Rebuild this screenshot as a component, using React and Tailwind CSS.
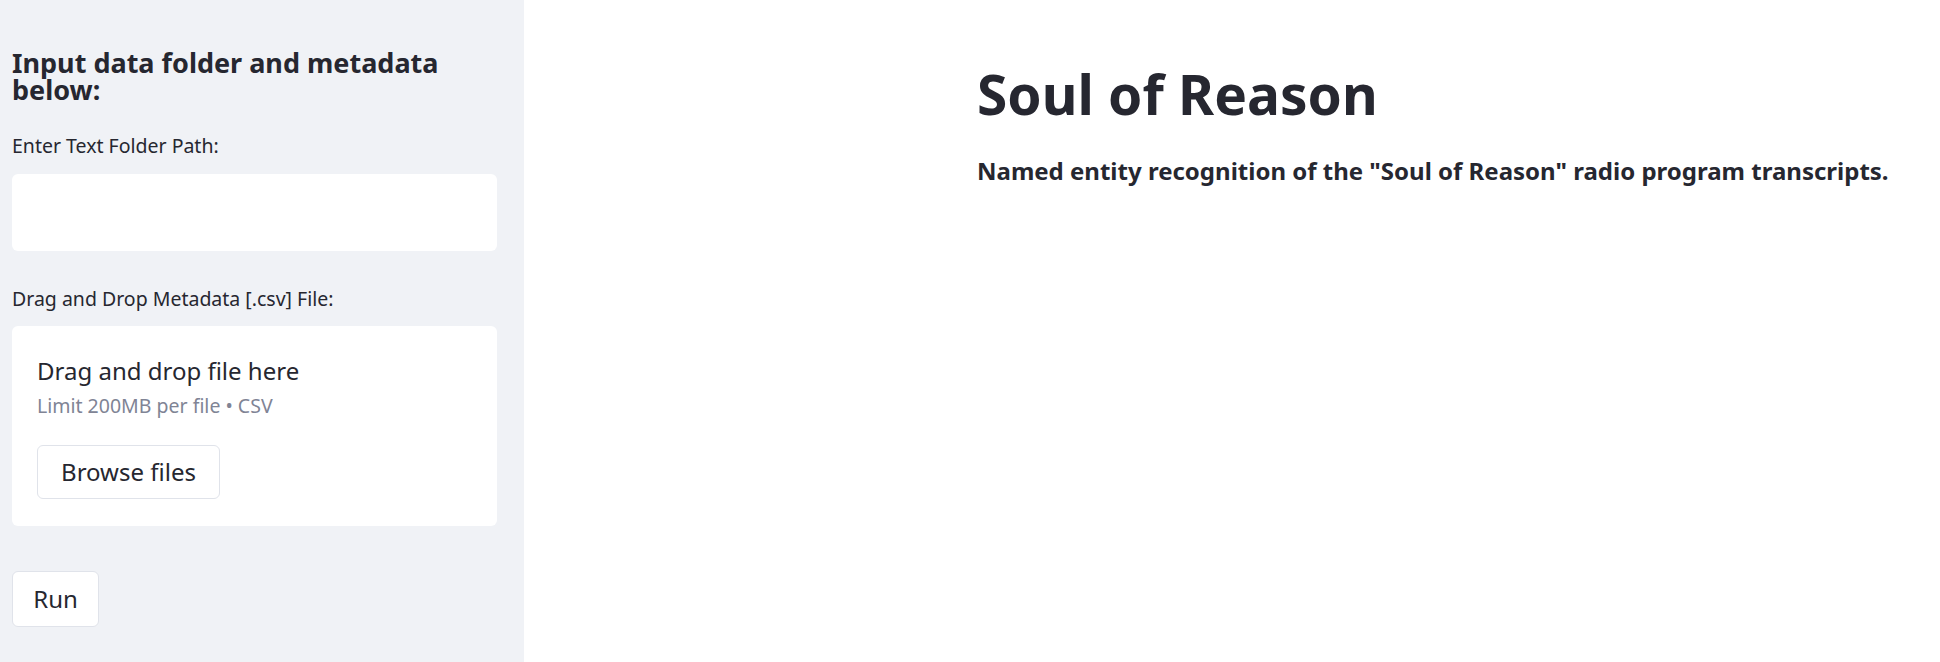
export default function App() {
  const font = { fontFamily: '"Noto Sans", "Open Sans", sans-serif' };
  return (
    <div className="flex w-[1940px] h-[662px] bg-white text-[#262730]" style={font}>
      <aside className="w-[524px] shrink-0 h-full bg-[#f0f2f6] pl-[12px] pr-[27px] pt-[49px]">
        <h2 className="text-[27px] font-bold leading-[27px]">Input data folder and metadata below:</h2>
        <div className="mt-[30px] text-[19.5px] leading-[26px]">Enter Text Folder Path:</div>
        <div className="mt-[15px] h-[77px] bg-white rounded-[6px]"></div>
        <div className="mt-[35px] text-[19.5px] leading-[26px]">Drag and Drop Metadata [.csv] File:</div>
        <div className="mt-[14px] h-[200px] bg-white rounded-[6px] pl-[25px] pt-[30px]">
          <div className="text-[24px] leading-[30px]">Drag and drop file here</div>
          <div className="mt-[8px] text-[19.5px] leading-[24px] text-[#808495]">Limit 200MB per file • CSV</div>
          <button className="mt-[27px] h-[54px] w-[183px] rounded-[6px] border-[1.5px] border-[#e0e3ea] bg-white text-[24px]">Browse files</button>
        </div>
        <button className="mt-[45px] h-[56px] w-[87px] rounded-[6px] border-[1.5px] border-[#e0e3ea] bg-white text-[24px]">Run</button>
      </aside>
      <main className="flex-1 pl-[453px] pt-[61px]">
        <h1 className="text-[55px] font-bold leading-[66px]">Soul of Reason</h1>
        <p className="mt-[28px] text-[24px] font-bold leading-[32px]">Named entity recognition of the "Soul of Reason" radio program transcripts.</p>
      </main>
    </div>
  );
}
